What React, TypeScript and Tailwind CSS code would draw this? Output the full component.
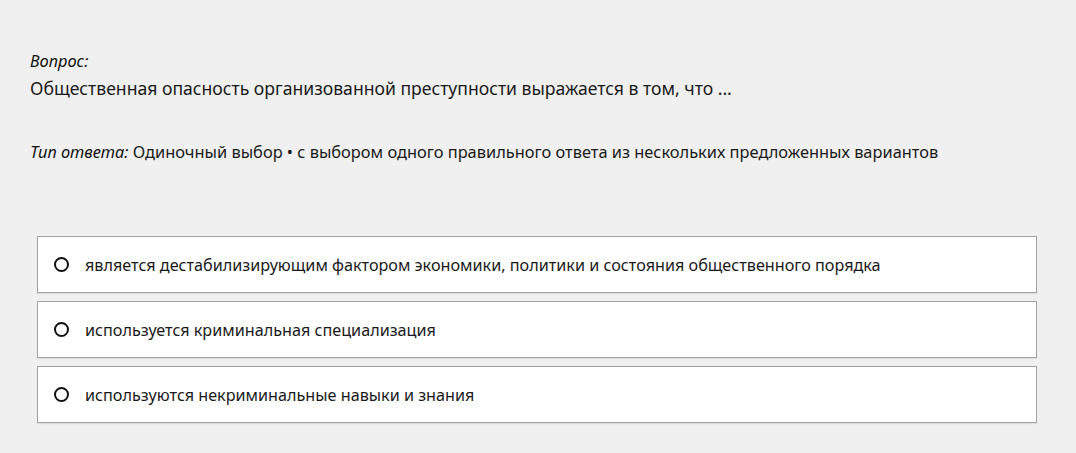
const options = [
  'является дестабилизирующим фактором экономики, политики и состояния общественного порядка',
  'используется криминальная специализация',
  'используются некриминальные навыки и знания',
]

export default function App() {
  return (
    <div
      className="min-h-[453px] w-full bg-[#f0f0f0] text-[#1a1a1a] pt-[50px] pl-[30px] pr-[39px]"
      style={{ fontFamily: '"Noto Sans", "Open Sans", sans-serif' }}
    >
      <div className="text-[16.4px] italic leading-[22px] text-[#111]">Вопрос:</div>
      <div className="mt-[1px] text-[17.6px] leading-[30px]">
        Общественная опасность организованной преступности выражается в том, что ...
      </div>
      <div className="mt-[38px] text-[16.4px] leading-[22px]">
        <span className="italic text-[#111]">Тип ответа:</span> Одиночный выбор • с выбором одного
        правильного ответа из нескольких предложенных вариантов
      </div>
      <div className="mt-[73px] ml-[7px] flex flex-col gap-[8px]">
        {options.map((o) => (
          <div
            key={o}
            className="flex h-[57px] items-center border border-[#a3a3a3] bg-white pl-[16px] shadow-[0_1px_1px_rgba(0,0,0,0.08)]"
          >
            <span className="h-[15px] w-[15px] shrink-0 rounded-full border-[2.5px] border-[#111]" />
            <span className="ml-[16px] pt-[2px] text-[16.2px]">{o}</span>
          </div>
        ))}
      </div>
    </div>
  )
}
